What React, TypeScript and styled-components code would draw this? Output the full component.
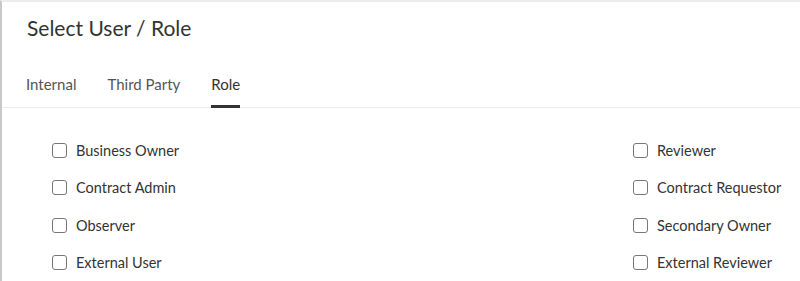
import React from 'react'
import styled, { createGlobalStyle } from 'styled-components'

const GlobalStyle = createGlobalStyle`
  body {
    margin: 0;
    background: #fff;
    font-family: Lato, 'Open Sans', sans-serif;
    color: #333;
  }
`

const Panel = styled.div`
  height: 281px;
  border-top: 2px solid #ececec;
  border-left: 2px solid #c8c8c8;
  box-sizing: border-box;
  overflow: hidden;
`

const Heading = styled.h1`
  margin: 0;
  padding: 13px 0 0 25px;
  font-size: 21px;
  font-weight: 400;
  line-height: 26px;
  color: #333;
`

const Tabs = styled.div`
  display: flex;
  gap: 31px;
  padding: 0 0 0 24px;
  margin-top: 34px;
  border-bottom: 1px solid #ececec;
`

const Tab = styled.div<{ $active?: boolean }>`
  font-size: 15px;
  line-height: 18px;
  padding-bottom: 12px;
  color: ${(p) => (p.$active ? '#333' : '#555')};
  border-bottom: 3px solid ${(p) => (p.$active ? '#333' : 'transparent')};
  margin-bottom: -1px;
`

const Options = styled.div`
  display: grid;
  grid-template-columns: 581px 1fr;
  grid-auto-rows: 37.3px;
  padding: 24px 0 0 50px;
`

const Option = styled.label`
  display: flex;
  align-items: center;
  gap: 9px;
  font-size: 14.5px;
  color: #333;
  cursor: pointer;
`

const Box = styled.span`
  width: 15px;
  height: 15px;
  box-sizing: border-box;
  border: 1.5px solid #777;
  border-radius: 3px;
  background: #fff;
`

const left = ['Business Owner', 'Contract Admin', 'Observer', 'External User']
const right = ['Reviewer', 'Contract Requestor', 'Secondary Owner', 'External Reviewer']

function App() {
  const items: string[] = []
  left.forEach((l, i) => {
    items.push(l)
    items.push(right[i])
  })
  return (
    <>
      <GlobalStyle />
      <Panel>
        <Heading>Select User / Role</Heading>
        <Tabs>
          <Tab>Internal</Tab>
          <Tab>Third Party</Tab>
          <Tab $active>Role</Tab>
        </Tabs>
        <Options>
          {items.map((name) => (
            <Option key={name}>
              <Box />
              {name}
            </Option>
          ))}
        </Options>
      </Panel>
    </>
  )
}

export default App
